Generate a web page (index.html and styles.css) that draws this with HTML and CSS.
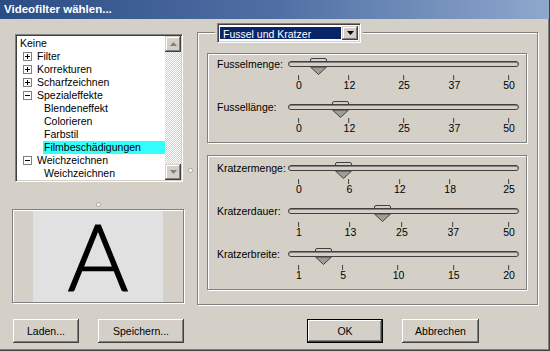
FILE: index.html
```html
<!DOCTYPE html>
<html lang="de">
<head>
    <meta charset="UTF-8">
    <title>Videofilter wählen...</title>
    <link rel="stylesheet" href="styles.css">
</head>
<body>
    <div class="window">
        <div class="titlebar">Videofilter wählen...</div>

        <div class="main">
            <!-- left: filter tree + preview -->
            <div class="left">
                <div class="tree">
                    <ul class="tree-list">
                        <li class="tree-item">Keine</li>
                        <li class="tree-item"><svg class="expander" width="9" height="9"><rect x=".5" y=".5" width="8" height="8" fill="#fff" stroke="#808080"/><path d="M2 4.5h5M4.5 2v5" stroke="#000"/></svg>Filter</li>
                        <li class="tree-item"><svg class="expander" width="9" height="9"><rect x=".5" y=".5" width="8" height="8" fill="#fff" stroke="#808080"/><path d="M2 4.5h5M4.5 2v5" stroke="#000"/></svg>Korrekturen</li>
                        <li class="tree-item"><svg class="expander" width="9" height="9"><rect x=".5" y=".5" width="8" height="8" fill="#fff" stroke="#808080"/><path d="M2 4.5h5M4.5 2v5" stroke="#000"/></svg>Scharfzeichnen</li>
                        <li class="tree-item"><svg class="expander" width="9" height="9"><rect x=".5" y=".5" width="8" height="8" fill="#fff" stroke="#808080"/><path d="M2 4.5h5" stroke="#000"/></svg>Spezialeffekte</li>
                        <li class="tree-item child">Blendeneffekt</li>
                        <li class="tree-item child">Colorieren</li>
                        <li class="tree-item child">Farbstil</li>
                        <li class="tree-item child selected">Filmbeschädigungen</li>
                        <li class="tree-item"><svg class="expander" width="9" height="9"><rect x=".5" y=".5" width="8" height="8" fill="#fff" stroke="#808080"/><path d="M2 4.5h5" stroke="#000"/></svg>Weichzeichnen</li>
                        <li class="tree-item child">Weichzeichnen</li>
                    </ul>
                    <div class="scrollbar">
                        <div class="scroll-btn"><svg width="7" height="4"><path d="M3.5 0L7 4H0z" fill="#808080"/></svg></div>
                        <div class="scroll-track"></div>
                        <div class="scroll-btn"><svg width="7" height="4"><path d="M0 0h7L3.5 4z" fill="#808080"/></svg></div>
                    </div>
                </div>
                <div class="splitter"><span class="grip-dot"></span></div>
                <div class="preview">
                    <div class="preview-canvas">A</div>
                </div>
            </div>

            <div class="side-grip"><span class="grip-dot"></span></div>

            <!-- right: filter settings -->
            <div class="group outer">
                <div class="combo">
                    <span class="combo-value">Fussel und Kratzer</span>
                    <span class="combo-btn"><svg width="7" height="4"><path d="M0 0h7L3.5 4z" fill="#000"/></svg></span>
                </div>

                <div class="group inner">
                    <div class="slider">
                        <div class="slider-row">
                            <span class="slider-label">Fusselmenge:</span>
                            <div class="track"><div class="track-range">
                                <svg class="thumb" style="left:9%" width="17" height="17"><path d="M.5 3V2Q.5.5 2 .5h13Q16.5.5 16.5 2V3" fill="#d4d0c8" stroke="#404040"/><path d="M.5 9L8.5 16.5 16.5 9z" fill="#a09c96" stroke="#404040"/></svg>
                            </div></div>
                        </div>
                        <div class="scale">
                            <span class="tick" style="left:0%">0</span>
                            <span class="tick" style="left:24%">12</span>
                            <span class="tick" style="left:50%">25</span>
                            <span class="tick" style="left:74%">37</span>
                            <span class="tick" style="left:100%">50</span>
                        </div>
                    </div>
                    <div class="slider">
                        <div class="slider-row">
                            <span class="slider-label">Fussellänge:</span>
                            <div class="track"><div class="track-range">
                                <svg class="thumb" style="left:19.5%" width="17" height="17"><path d="M.5 3V2Q.5.5 2 .5h13Q16.5.5 16.5 2V3" fill="#d4d0c8" stroke="#404040"/><path d="M.5 9L8.5 16.5 16.5 9z" fill="#a09c96" stroke="#404040"/></svg>
                            </div></div>
                        </div>
                        <div class="scale">
                            <span class="tick" style="left:0%">0</span>
                            <span class="tick" style="left:24%">12</span>
                            <span class="tick" style="left:50%">25</span>
                            <span class="tick" style="left:74%">37</span>
                            <span class="tick" style="left:100%">50</span>
                        </div>
                    </div>
                </div>

                <div class="group inner lower">
                    <div class="slider">
                        <div class="slider-row">
                            <span class="slider-label">Kratzermenge:</span>
                            <div class="track"><div class="track-range">
                                <svg class="thumb" style="left:21%" width="17" height="17"><path d="M.5 3V2Q.5.5 2 .5h13Q16.5.5 16.5 2V3" fill="#d4d0c8" stroke="#404040"/><path d="M.5 9L8.5 16.5 16.5 9z" fill="#a09c96" stroke="#404040"/></svg>
                            </div></div>
                        </div>
                        <div class="scale">
                            <span class="tick" style="left:0%">0</span>
                            <span class="tick" style="left:24%">6</span>
                            <span class="tick" style="left:48%">12</span>
                            <span class="tick" style="left:72%">18</span>
                            <span class="tick" style="left:100%">25</span>
                        </div>
                    </div>
                    <div class="slider">
                        <div class="slider-row">
                            <span class="slider-label">Kratzerdauer:</span>
                            <div class="track"><div class="track-range">
                                <svg class="thumb" style="left:39.5%" width="17" height="17"><path d="M.5 3V2Q.5.5 2 .5h13Q16.5.5 16.5 2V3" fill="#d4d0c8" stroke="#404040"/><path d="M.5 9L8.5 16.5 16.5 9z" fill="#a09c96" stroke="#404040"/></svg>
                            </div></div>
                        </div>
                        <div class="scale">
                            <span class="tick" style="left:0%">1</span>
                            <span class="tick" style="left:24.5%">13</span>
                            <span class="tick" style="left:49%">25</span>
                            <span class="tick" style="left:73.5%">37</span>
                            <span class="tick" style="left:100%">50</span>
                        </div>
                    </div>
                    <div class="slider">
                        <div class="slider-row">
                            <span class="slider-label">Kratzerbreite:</span>
                            <div class="track"><div class="track-range">
                                <svg class="thumb" style="left:11.4%" width="17" height="17"><path d="M.5 3V2Q.5.5 2 .5h13Q16.5.5 16.5 2V3" fill="#d4d0c8" stroke="#404040"/><path d="M.5 9L8.5 16.5 16.5 9z" fill="#a09c96" stroke="#404040"/></svg>
                            </div></div>
                        </div>
                        <div class="scale">
                            <span class="tick" style="left:0%">1</span>
                            <span class="tick" style="left:21%">5</span>
                            <span class="tick" style="left:47.4%">10</span>
                            <span class="tick" style="left:73.7%">15</span>
                            <span class="tick" style="left:100%">20</span>
                        </div>
                    </div>
                </div>
            </div>
        </div>

        <div class="btn-row">
            <button class="btn">Laden...</button>
            <button class="btn wide">Speichern...</button>
            <button class="btn ok">OK</button>
            <button class="btn cancel">Abbrechen</button>
        </div>
    </div>
</body>
</html>
```

FILE: styles.css
```css
* {
    box-sizing: border-box;
}
body {
    margin: 0;
    font-family: "Liberation Sans", Arial, sans-serif;
    font-size: 10.5px;
    color: #000;
    background: #d4d0c8;
}
.window {
    width: 550px;
    height: 351px;
    background: #d4d0c8;
    border-right: 1px solid #404040;
    border-bottom: 1px solid #404040;
    box-shadow: inset -1px -1px 0 #808080;
}
.titlebar {
    height: 19px;
    line-height: 19px;
    padding-left: 4px;
    font-size: 11.5px;
    font-weight: bold;
    color: #fff;
    background: linear-gradient(90deg, #2c4c86, #4f6fa4 50%, #8ea8cc);
}
.main {
    display: flex;
    align-items: flex-start;
    height: 300px;
}

/* tree */
.left {
    width: 172px;
    margin: 15px 0 0 12px;
}
.tree {
    display: flex;
    width: 168px;
    height: 148px;
    margin-left: 3px;
    background: #fff;
    border: 1px solid;
    border-color: #808080 #fff #fff #808080;
    box-shadow: inset 1px 1px 0 #404040, inset -1px -1px 0 #d4d0c8;
    padding: 1px;
}
.tree-list {
    list-style: none;
    margin: 0;
    padding: 1px 0 0;
    flex: 1;
}
.tree-item {
    height: 13px;
    line-height: 13px;
    padding-left: 3px;
    display: flex;
    align-items: center;
    white-space: nowrap;
}
.expander {
    margin: 0 5px 0 3px;
    flex: none;
}
.tree-item.child {
    margin-left: 26px;
    padding-left: 1px;
}
.tree-item.selected {
    background: #3ff;
}
.scrollbar {
    width: 16px;
    display: flex;
    flex-direction: column;
}
.scroll-btn {
    height: 16px;
    display: flex;
    align-items: center;
    justify-content: center;
    background: #d4d0c8;
    box-shadow: inset -1px -1px 0 #404040, inset 1px 1px 0 #d4d0c8, inset -2px -2px 0 #808080, inset 2px 2px 0 #fff;
}
.scroll-track {
    flex: 1;
    background: repeating-conic-gradient(#fff 0 25%, #d4d0c8 0 50%) 0 0 / 2px 2px;
}
.splitter {
    height: 27px;
    display: flex;
    justify-content: center;
    padding-top: 20px;
}
.grip-dot {
    display: block;
    width: 5px;
    height: 5px;
    border-radius: 50%;
    background: #fff;
    border: 1px solid #a8a49c;
}
.preview {
    height: 94px;
    border: 1px solid #808080;
    box-shadow: inset 1px 1px 0 #fff, 1px 1px 0 #fff;
    padding: 1px 0 0 20px;
}
.preview-canvas {
    width: 130px;
    height: 91px;
    background: #e1e1e1;
    font-family: "Lato", "DejaVu Sans", sans-serif;
    font-weight: 300;
    font-size: 93px;
    line-height: 88px;
    text-align: center;
    -webkit-text-stroke: 1.2px #000;
}
.side-grip {
    width: 13px;
    display: flex;
    justify-content: center;
    padding-top: 149px;
}

/* group boxes */
.group {
    border: 1px solid #808080;
    box-shadow: inset 1px 1px 0 #fff, 1px 1px 0 #fff;
}
.group.outer {
    width: 341px;
    height: 273px;
    margin-top: 13px;
    padding: 0 9px;
}
.group.inner {
    width: 320px;
    margin-top: 10px;
    padding: 2px 0 0 9px;
}
.group.inner.lower {
    margin-top: 12px;
    padding-top: 4px;
}
.combo {
    display: flex;
    width: 144px;
    height: 20px;
    margin: -10px 0 0 10px;
    background: #fff;
    border: 1px solid;
    border-color: #808080 #fff #fff #808080;
    box-shadow: inset 1px 1px 0 #404040, inset -1px -1px 0 #d4d0c8, 0 0 0 2px #d4d0c8;
    padding: 2px;
}
.combo-value {
    flex: 1;
    margin: 1px 1px 1px 0;
    padding-left: 3px;
    line-height: 14px;
    background: #0a246a;
    color: #fff;
}
.combo-btn {
    width: 16px;
    display: flex;
    align-items: center;
    justify-content: center;
    background: #d4d0c8;
    box-shadow: inset -1px -1px 0 #404040, inset 1px 1px 0 #d4d0c8, inset -2px -2px 0 #808080, inset 2px 2px 0 #fff;
}

/* sliders */
.slider-row {
    display: flex;
    align-items: center;
    height: 16px;
}
.slider-label {
    width: 71px;
    white-space: nowrap;
}
.track {
    position: relative;
    width: 231px;
    height: 6px;
    border: 1px solid #404040;
    border-radius: 3px;
    background: #d4d0c8;
    box-shadow: inset 0 1px 0 #808080;
}
.track-range {
    position: absolute;
    left: 10px;
    right: 9px;
    top: -4px;
}
.thumb {
    position: absolute;
    top: 0;
    margin-left: -8px;
}
.scale {
    position: relative;
    height: 27px;
    margin-left: 82px;
    width: 210px;
}
.tick {
    position: absolute;
    top: 8px;
    line-height: 11px;
    transform: translateX(-50%);
}
.tick::before {
    content: '';
    position: absolute;
    left: calc(50% - 1px);
    top: -5px;
    width: 1px;
    height: 5px;
    background: #404040;
}

/* buttons */
.btn-row {
    display: flex;
    gap: 19px;
    padding-left: 13px;
}
.btn {
    width: 66px;
    height: 24px;
    padding: 0;
    font: inherit;
    color: #000;
    background: #d4d0c8;
    border: none;
    box-shadow: inset -1px -1px 0 #404040, inset 1px 1px 0 #fff, inset -2px -2px 0 #808080, inset 2px 2px 0 #d4d0c8;
}
.btn.wide {
    width: 86px;
}
.btn.ok {
    width: 76px;
    margin-left: 104px;
    border: 1px solid #000;
}
.btn.cancel {
    width: 77px;
}
```
